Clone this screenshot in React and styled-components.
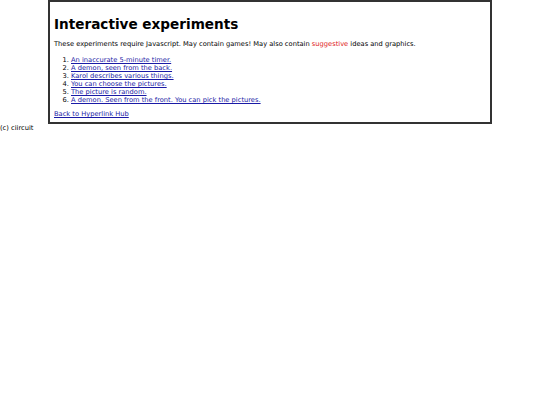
import React from "react";
import styled, { createGlobalStyle } from "styled-components";

const Global = createGlobalStyle`
  html, body { margin: 0; padding: 0; background: #fff; }
  body { font-family: "DejaVu Sans", Verdana, sans-serif; font-size: 6.7px; color: #000; }
`;

const Box = styled.div`
  box-sizing: border-box;
  width: 444px;
  margin: 0 0 0 48px;
  border: 2px solid #333;
  padding: 0 4px 4px 4px;
`;

const Title = styled.h1`
  font-size: 13.6px;
  font-weight: bold;
  margin: 14px 0 8px 0;
  line-height: 16px;
`;

const Para = styled.p`
  margin: 0 0 8px 0;
  line-height: 8px;
`;

const List = styled.ol`
  margin: 0 0 6px 0;
  padding-left: 17px;
  line-height: 8px;
`;

const Link = styled.a`
  color: #1a1aa6;
  text-decoration-thickness: 0.6px;
  text-underline-offset: 1px;
`;

const Red = styled.span`
  color: #e02020;
`;

const Back = styled.div`
  line-height: 8px;
`;

const Footer = styled.div`
  line-height: 8px;
`;

const items = [
  "An inaccurate 5-minute timer.",
  "A demon, seen from the back.",
  "Karol describes various things.",
  "You can choose the pictures.",
  "The picture is random.",
  "A demon. Seen from the front. You can pick the pictures.",
];

export default function App() {
  return (
    <>
      <Global />
      <Box>
        <Title>Interactive experiments</Title>
        <Para>
          These experiments require Javascript. May contain games! May also contain{" "}
          <Red>suggestive</Red> ideas and graphics.
        </Para>
        <List>
          {items.map((t) => (
            <li key={t}>
              <Link href="#">{t}</Link>
            </li>
          ))}
        </List>
        <Back>
          <Link href="#">Back to Hyperlink Hub</Link>
        </Back>
      </Box>
      <Footer>(c) ciircuit</Footer>
    </>
  );
}
